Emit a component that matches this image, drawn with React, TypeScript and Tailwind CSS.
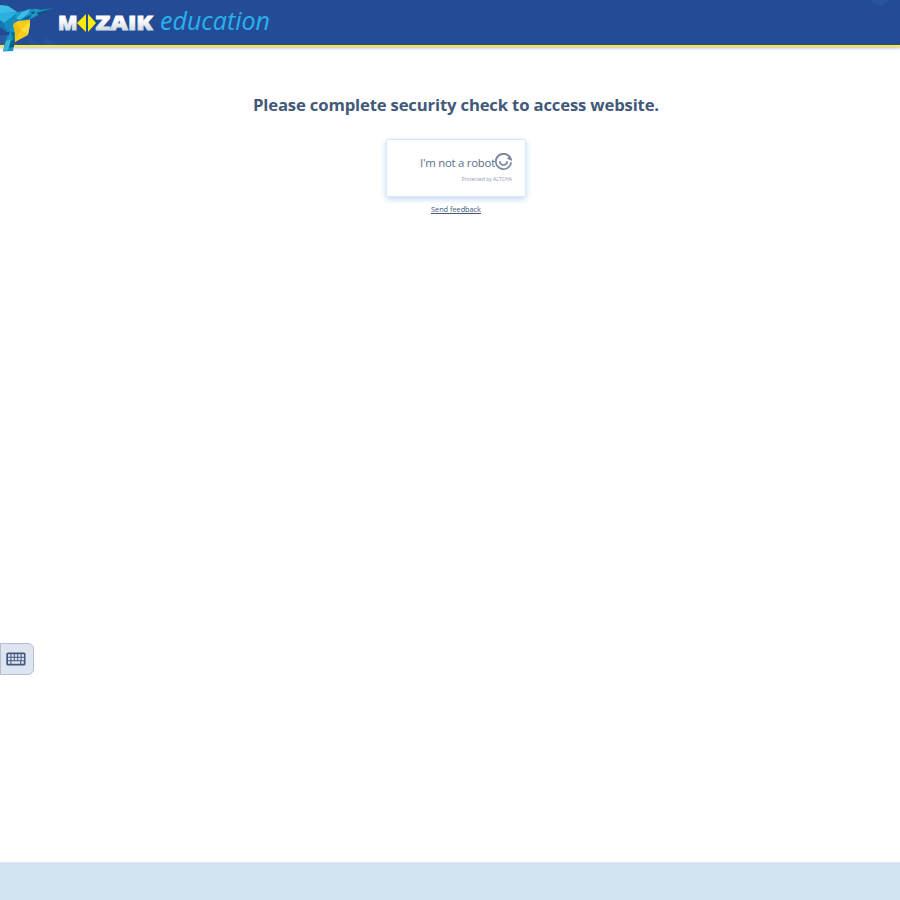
function Bird() {
  return (
    <svg className="absolute left-0 top-0" width="60" height="56" viewBox="0 0 60 56" aria-hidden="true">
      <path d="M0 36 L12 34 L17 45 L0 45Z" fill="#2c5aa3" />
      <path d="M29 45 L30 36 L38 45Z M44 45 L44 36 L60 45Z" fill="#28509c" />
      <path d="M0 5 L8 6 L17 12 L25 11 L16 20 L13 32 L0 26Z" fill="#1aa2d6" />
      <path d="M0 5 L8 6 L17 12 L0 13Z" fill="#3dbce8" />
      <path d="M0 13 L16 13 L4 23 L0 20Z" fill="#2bb0df" />
      <path d="M4 23 L16 14 L13 31 L7 32Z" fill="#168abc" />
      <path d="M0 20 L4 23 L7 32 L0 27Z" fill="#1479ad" />
      <path d="M14 20 L30 19 L30 25 L28 35 L15 42 L12 36Z" fill="#f7cd1b" />
      <path d="M14 21 L21 30 L14 41Z" fill="#efbd14" />
      <path d="M21 30 L30 22 L28 34Z" fill="#ffdd39" />
      <path d="M13 24 L15 18 L20 12 L30 9 L39 9 L42 13 L35 17 L29 20 L18 21Z" fill="#168abb" />
      <path d="M16 18 L22 12 L30 9 L28 14 L20 20Z" fill="#3cbce7" />
      <path d="M28 13 L36 9 L42 12 L32 17Z" fill="#239fce" />
      <path d="M20 20 L33 14 L28 19Z" fill="#096492" />
      <path d="M30 13 L35 11 L34 14Z" fill="#084767" />
      <path d="M36 10 L53 8.5 L38 14Z" fill="#1792c1" />
      <path d="M36 13 L53 8.5 L39 15Z" fill="#0a5377" />
      <path d="M10 29 L14 27 L15 38 L12 43 L9 36Z" fill="#1598c6" />
      <path d="M11 31 L15 33 L13 41Z" fill="#087099" />
      <path d="M8 35 L12 38 L14 44 L13 51 L3 51.5 L5 42Z" fill="#1394c0" />
      <path d="M6 41 L11 39 L8 50 L3 51.5Z" fill="#39b4da" />
      <path d="M11 41 L15 38 L14 47 L9 48Z" fill="#075f86" />
    </svg>
  );
}

function Logo() {
  return (
    <svg className="absolute left-[54px] top-0" width="226" height="44" viewBox="54 0 226 44" role="img" aria-label="Mozaik education">
      <defs>
        <linearGradient id="silver" x1="0" y1="15" x2="0" y2="31" gradientUnits="userSpaceOnUse">
          <stop offset="0.3" stopColor="#ffffff" />
          <stop offset="1" stopColor="#cbd6df" />
        </linearGradient>
      </defs>
      <g fill="url(#silver)" stroke="url(#silver)" strokeWidth="0.8" fontFamily="'Open Sans', sans-serif" fontWeight="800" fontSize="20">
        <text x="58" y="30" textLength="19.5" lengthAdjust="spacingAndGlyphs">M</text>
        <text x="95.5" y="30" textLength="57.5" lengthAdjust="spacingAndGlyphs">ZAIK</text>
      </g>
      <path d="M86 14 V32 L77 23Z M88 14 V32 L96 23Z" fill="#ffed00" />
      <text x="160" y="30.3" fill="#28b1ef" fontFamily="'Open Sans', sans-serif" fontStyle="italic" fontSize="25" textLength="110" lengthAdjust="spacingAndGlyphs">
        education
      </text>
    </svg>
  );
}

function AltchaLogo() {
  return (
    <svg className="h-[17px] w-[17px] shrink-0" viewBox="0 0 20 20" fill="currentColor" aria-hidden="true">
      <path d="M2.33955 16.4279C5.88954 20.6586 12.1971 21.2105 16.4279 17.6604C18.4699 15.947 19.6548 13.5911 19.9352 11.1365L17.9886 10.4279C17.8738 12.5624 16.909 14.6459 15.1423 16.1284C11.7577 18.9684 6.71167 18.5269 3.87164 15.1423C1.03163 11.7577 1.4731 6.71166 4.8577 3.87164C8.24231 1.03162 13.2883 1.4731 16.1284 4.8577C16.9767 5.86872 17.5322 7.02798 17.804 8.2324L19.9522 9.01429C19.7622 7.07737 19.0059 5.17558 17.6604 3.57212C14.1104 -0.658624 7.80283 -1.21043 3.57212 2.33956C-0.658625 5.88958 -1.21046 12.1971 2.33955 16.4279Z" />
      <path d="M3.57212 2.33956C1.65755 3.94607 0.496389 6.11731 0.12782 8.40523L2.04639 9.13961C2.26047 7.15832 3.21057 5.25375 4.8577 3.87164C8.24231 1.03162 13.2883 1.4731 16.1284 4.8577L13.8302 6.78606L19.9633 9.13364C19.7929 7.15555 19.0335 5.20847 17.6604 3.57212C14.1104 -0.658624 7.80283 -1.21043 3.57212 2.33956Z" />
      <path d="M4.6 9.7C4.6 12.9 7 15.2 10 15.2C13 15.2 15.4 12.9 15.4 9.7H13.3C13.3 11.7 11.8 13.1 10 13.1C8.2 13.1 6.7 11.7 6.7 9.7Z" />
    </svg>
  );
}

export default function App() {
  return (
    <div className="flex h-[900px] w-[900px] flex-col overflow-hidden bg-white font-['Open_Sans',sans-serif] text-[#42597a]">
      <header className="relative h-[47px] shrink-0 border-b-2 border-[#ffec2d] bg-[#244c96] shadow-[0_1px_3px_#a8b9df]">
        <svg className="absolute right-0 top-0" width="40" height="8" aria-hidden="true">
          <path d="M9 0 H30 L20 6Z" fill="#2954a1" />
        </svg>
        <Bird />
        <Logo />
      </header>

      <main className="relative flex flex-1 flex-col items-center pl-3">
        <h1 className="mt-[46px] text-[16.7px] font-bold leading-6 tracking-[-0.17px]">Please complete security check to access website.</h1>
        <div className="mt-[22px] flex h-[58px] w-[140px] flex-col items-end rounded-[3px] border border-[#dae7f8] pr-[13px] pt-[13px] shadow-[0_2px_6px_#bfd4f0]">
          <label className="flex h-[18px] items-start text-[#7c8aa1]">
            <span className="mt-[1px] whitespace-nowrap text-[11.4px] leading-[18px] tracking-[-0.25px] text-[#5c6d88]">I'm not a robot</span>
            <AltchaLogo />
          </label>
          <span className="mt-[4px] whitespace-nowrap text-[5.1px] leading-[8px] text-[#8f9bb0]">Protected by ALTCHA</span>
        </div>
        <a href="#" className="mt-[7px] text-[7.3px] leading-[10px] underline">Send feedback</a>

        <button aria-label="Keyboard" className="absolute left-0 top-[596px] flex h-[32px] w-[34px] items-center rounded-r-[6px] border border-[#b5bed0] bg-[#dde4f2] pl-[5px]">
          <svg width="20" height="14" viewBox="0 0 20 14" aria-hidden="true">
            <rect x="0.3" y="0.5" width="19.2" height="13" rx="1.5" fill="#42597a" />
            <path d="M2 3.5H18M2 7H18" stroke="#dde4f2" strokeWidth="2.3" strokeDasharray="2.4 1" />
            <path d="M2 10.5H4.4M5.4 10.5H14.2M15.2 10.5H17.8" stroke="#dde4f2" strokeWidth="2.3" />
          </svg>
        </button>
      </main>

      <footer className="h-[38px] shrink-0 border-t border-[#e0ebf6] bg-[#d2e4f1]" />
    </div>
  );
}
